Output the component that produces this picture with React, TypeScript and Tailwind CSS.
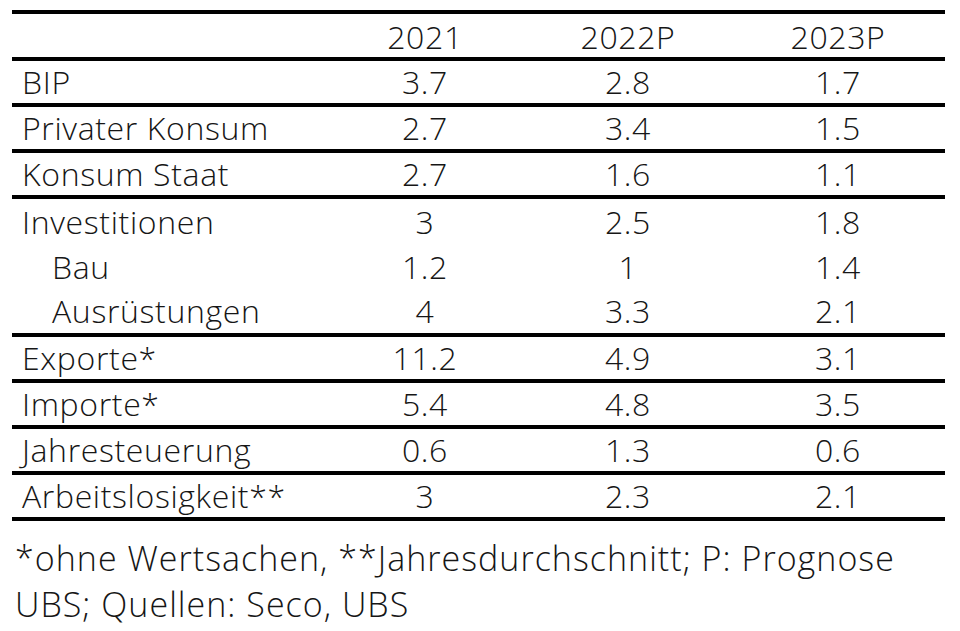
import React from "react";

type Row = { label: string; v: [string, string, string]; indent?: boolean };

const simple: Row[] = [
  { label: "BIP", v: ["3.7", "2.8", "1.7"] },
  { label: "Privater Konsum", v: ["2.7", "3.4", "1.5"] },
  { label: "Konsum Staat", v: ["2.7", "1.6", "1.1"] },
];

const group: Row[] = [
  { label: "Investitionen", v: ["3", "2.5", "1.8"] },
  { label: "Bau", v: ["1.2", "1", "1.4"], indent: true },
  { label: "Ausrüstungen", v: ["4", "3.3", "2.1"], indent: true },
];

const rest: Row[] = [
  { label: "Exporte*", v: ["11.2", "4.9", "3.1"] },
  { label: "Importe*", v: ["5.4", "4.8", "3.5"] },
  { label: "Jahresteuerung", v: ["0.6", "1.3", "0.6"] },
  { label: "Arbeitslosigkeit**", v: ["3", "2.3", "2.1"] },
];

const cols = "grid grid-cols-[313px_200px_206px_214px]";

function Cells({ r }: { r: Row }) {
  return (
    <>
      <div className={r.indent ? "pl-[40px]" : "pl-[10px]"}>{r.label}</div>
      <div className="text-center">{r.v[0]}</div>
      <div className="text-center">{r.v[1]}</div>
      <div className="text-center">{r.v[2]}</div>
    </>
  );
}

export default function App() {
  return (
    <div
      className="w-[960px] h-[631px] bg-white text-[#161616] font-[350] overflow-hidden"
      style={{ fontFamily: '"Open Sans", "Noto Sans", sans-serif' }}
    >
      <div className="ml-[12px] mt-[10px] w-[933px] border-t-[4px] border-black text-[32px] tracking-[0.02em] leading-none">
        <div className={`${cols} h-[43px] items-center pt-[2px]`}>
          <div />
          <div className="text-center">2021</div>
          <div className="text-center">2022P</div>
          <div className="text-center">2023P</div>
        </div>
        {simple.map((r) => (
          <div key={r.label} className={`${cols} h-[46px] border-t-[4px] border-black items-center`}>
            <Cells r={r} />
          </div>
        ))}
        <div className="border-t-[4px] border-black">
          {group.map((r, i) => (
            <div
              key={r.label}
              className={`${cols} ${i === 2 ? "h-[44px]" : "h-[45px]"} items-center`}
            >
              <Cells r={r} />
            </div>
          ))}
        </div>
        {rest.map((r) => (
          <div key={r.label} className={`${cols} h-[46px] border-t-[4px] border-black items-center`}>
            <Cells r={r} />
          </div>
        ))}
        <div className="border-t-[4px] border-black" />
      </div>
      <div className="ml-[15px] mt-[14px] text-[34px] tracking-[0.03em] leading-[46px]">
        <div>*ohne Wertsachen, **Jahresdurchschnitt; P: Prognose</div>
        <div>UBS; Quellen: Seco, UBS</div>
      </div>
    </div>
  );
}
